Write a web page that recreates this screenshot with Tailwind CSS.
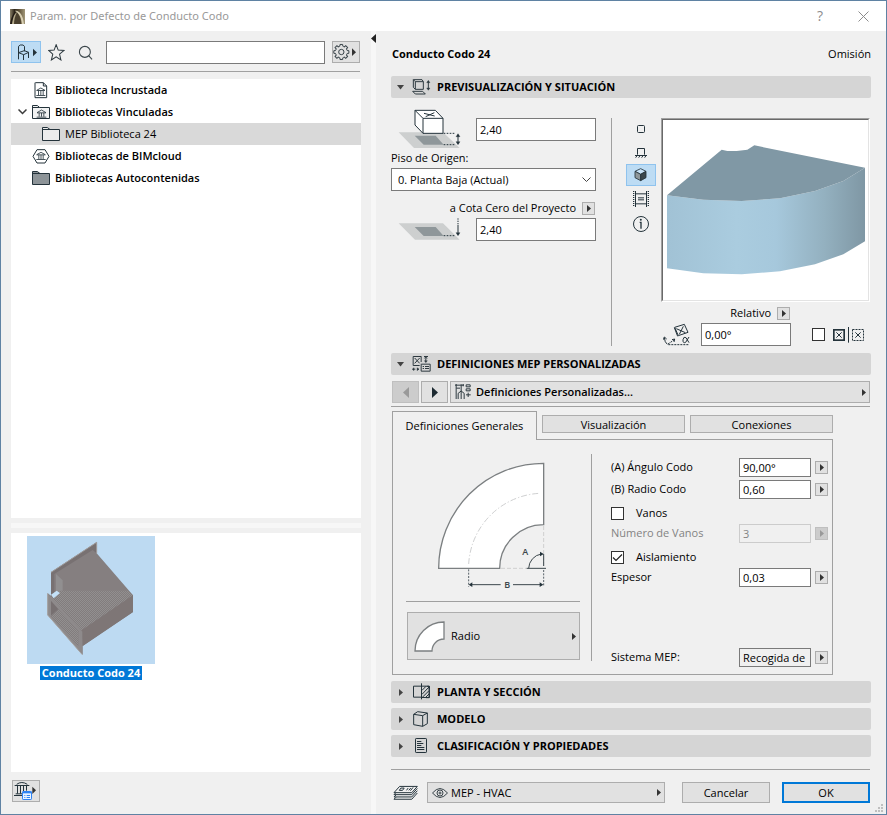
<!DOCTYPE html>
<html lang="es">
<head>
<meta charset="utf-8">
<meta name="viewport" content="width=device-width, initial-scale=1">
<title>Param. por Defecto de Conducto Codo</title>
<script src="https://cdn.jsdelivr.net/npm/@tailwindcss/browser@4"></script>
</head>
<body class="bg-[#f0f0f0] font-['Open_Sans','Noto_Sans',sans-serif] text-[11px] leading-4 text-black">
<div class="relative flex min-h-screen flex-col border border-[#5f82a3]">

  <!-- Title bar -->
  <header class="flex h-[30px] shrink-0 items-center bg-white pl-[9px] pr-[17px]">
    <svg class="size-[15px]" viewBox="0 0 15 15" aria-hidden="true">
      <defs><linearGradient id="lg" x1="0" y1="0" x2="1" y2="0"><stop offset="0" stop-color="#8b8168"/><stop offset=".3" stop-color="#2e261b"/><stop offset=".6" stop-color="#5d5138"/><stop offset="1" stop-color="#a3987a"/></linearGradient></defs>
      <rect width="15" height="15" fill="url(#lg)"/>
      <path d="M0 15C1 9 3 4 6 2L5 6 3 15Z" fill="#241d16"/>
      <path d="M5 2C9 1 13 6 14 15H12C11 8 9 4 5 2Z" fill="#d9d0b4"/>
      <path d="M3 15C4 9 5 6 7 4C10 7 11 11 11 15Z" fill="#4a402e"/>
      <path d="M2 15C3 9 4 5 7 3C5 7 4 11 4 15Z" fill="#b5aa8b"/>
    </svg>
    <h1 class="ml-[5px] flex-1 font-['Noto_Sans','Open_Sans',sans-serif] text-[#999]">Param. por Defecto de Conducto Codo</h1>
    <button aria-label="Ayuda" class="w-5 text-sm text-[#8c8c8c]">?</button>
    <button aria-label="Cerrar" class="ml-[28px]"><svg class="size-[11px]" viewBox="0 0 11 11" fill="none" stroke="#8c8c8c"><path d="M.5.5l10 10M10.5.5l-10 10"/></svg></button>
  </header>

  <div class="grid flex-1 grid-cols-[375fr_510fr]">

    <!-- Library browser -->
    <aside class="flex flex-col pb-3">
      <div class="flex min-h-0 flex-1">
        <div class="flex min-w-0 flex-1 flex-col pl-[10px] pr-[10px]">
          <div class="mt-[10px] flex h-[22px] items-center pr-px">
            <button aria-label="Tipo de objeto" class="flex h-[22px] w-[30px] items-center justify-center border border-[#8fc3ee] bg-[#bddcf4]">
              <svg class="h-[22px] w-[30px] shrink-0" viewBox="33 123 90 66" fill="none" stroke="#24333b" stroke-width="3"><path d="M55.500 178V139L61 135H69L73.500 139V154M55.500 158L71 164L86 157L73 152L55.500 158M70.500 164V180M85.500 157V174"/><path d="M99 146V169L111 157.500Z" fill="#24333b" stroke="none"/></svg>
            </button>
            <button aria-label="Favoritos" class="ml-[7px]"><svg class="size-[17px]" viewBox="144 132 50 50" fill="none" stroke="#2e3a40" stroke-width="3"><path d="M168 134L174 150L191 151L178 162L182 179L168 170L154 179L158 162L146 151L162 150Z"/></svg></button>
            <button aria-label="Buscar" class="ml-[13px]"><svg class="size-[15px]" viewBox="234 132 48 48" fill="none" stroke="#3b464b" stroke-width="3.500"><circle cx="256" cy="154" r="17.500"/><path d="M268 166L279 178"/></svg></button>
            <input aria-label="Texto de búsqueda" class="ml-[13px] h-[23px] min-w-0 flex-1 border border-[#7a7a7a] bg-white px-1">
            <button aria-label="Ajustes de biblioteca" class="ml-[7px] h-[22px] w-[28px] border border-[#adadad] bg-[#e1e1e1]">
              <svg class="h-5 w-[26px]" viewBox="1000 127 78 60" fill="none" stroke="#3a454b" stroke-width="3">
                <defs><path id="tooth" d="M16.600-6.900L17.500-4.400L22.600-4V4L17.500 4.400L16.600 6.900"/></defs>
                <g transform="translate(1025 157)"><use href="#tooth"/><use href="#tooth" transform="rotate(45)"/><use href="#tooth" transform="rotate(90)"/><use href="#tooth" transform="rotate(135)"/><use href="#tooth" transform="rotate(180)"/><use href="#tooth" transform="rotate(225)"/><use href="#tooth" transform="rotate(270)"/><use href="#tooth" transform="rotate(315)"/><circle r="8"/></g>
                <path d="M1057 146V169L1069 157.500Z" fill="#333" stroke="none"/></svg>
            </button>
          </div>
          <div class="mr-px mt-2 h-px shrink-0 bg-[#a0a0a0]"></div>

          <ul class="mt-[7px] grow-[439] basis-0 bg-white font-semibold">
            <li class="flex h-[22px] items-center pl-[21px]">
              <svg class="h-[17px] w-[18px]" viewBox="95 244 54 51" fill="none" stroke="#24333b" stroke-width="3"><path d="M105 246H129L139 256V291H104V246M129 246V256H139"/><path d="M109 269L121.500 262L134 269M109 269.500H134M114.500 270V283M121.500 270V283M128.500 270V283M108 284.500H135" stroke-width="2.500"/></svg>
              <span class="ml-[5px]">Biblioteca Incrustada</span></li>
            <li class="flex h-[22px] items-center pl-[7px]">
              <svg class="h-[6px] w-[9px]" viewBox="0 0 9 6" fill="none" stroke="#3c3c3c" stroke-width="1.500"><path d="M.5.5L4.500 4.500L8.500.5"/></svg>
              <svg class="ml-[5px] h-[17px] w-[18px]" viewBox="96 311 54 51" fill="none" stroke="#24333b" stroke-width="3"><path d="M97.500 354.500V315.500H112L119 321.500H148.500V354.500ZM98 321.500H119" fill="#f1f2f2"/><path d="M111 337L124.500 329L138 337M111 337.500H138M117.500 338V349M124.500 338V349M131.500 338V349M110 350.500H139" stroke-width="2.500"/></svg>
              <span class="ml-[5px]">Bibliotecas Vinculadas</span></li>
            <li class="flex h-[22px] items-center bg-[#d9d9d9] pl-[31px] font-normal">
              <svg class="h-[17px] w-[18px]" viewBox="126 377 54 51" fill="none" stroke="#24333b" stroke-width="3"><path d="M127.500 420.500V381.500H142L150 387.500H178.500V420.500ZM128 387.500H150" fill="#ececec"/></svg>
              <span class="ml-[5px]">MEP Biblioteca 24</span></li>
            <li class="flex h-[22px] items-center pl-[21px]">
              <svg class="h-[17px] w-[18px]" viewBox="95 444 54 51" fill="none" stroke="#24333b" stroke-width="3"><path d="M110 449H134L146 469L134 489H110L98 469Z"/><path d="M109 464L122 457L135 464M109 464.500H135M115.500 465V477M122 465V477M128.500 465V477M108 478.500H136" stroke-width="2.500"/></svg>
              <span class="ml-[5px]">Bibliotecas de BIMcloud</span></li>
            <li class="flex h-[22px] items-center pl-[21px]">
              <svg class="h-[17px] w-[18px]" viewBox="96 509 54 51" fill="#8d9498" stroke="#24333b" stroke-width="3"><path d="M97.500 552.500V513.500H112L120 519.500H148.500V552.500ZM98 519.500H120"/></svg>
              <span class="ml-[5px]">Bibliotecas Autocontenidas</span></li>
          </ul>
          <div class="my-[5px] h-[5px] shrink-0 bg-[#f7f7f7]"></div>
          <div class="grow-[236] basis-0 bg-white pl-4 pt-[3px]">
            <figure class="flex w-32 flex-col items-center gap-[2px]">
              <svg class="size-32 bg-[#bddaf2]" viewBox="81 78 384 384">
                <defs><pattern id="dots" width="6" height="6" patternUnits="userSpaceOnUse"><rect width="6" height="6" fill="#827c7d"/><rect width="3" height="3" fill="#929090"/><rect x="3" y="3" width="3" height="3" fill="#929090"/></pattern></defs>
                <path d="M153 187L290 97V130L399 256V306L248 408V434L143 315V250L153 257Z" fill="#857f80"/>
                <path d="M153 187L290 97V130L278 120L163 192V250L153 257Z" fill="#787172"/>
                <path d="M153 187L290 97V130" fill="none" stroke="#a09d9d" stroke-width="3"/>
                <path d="M168 192L188 211V242L168 247Z" fill="#918f90"/>
                <path d="M180 242H385L399 256L245 361L152 263Z" fill="url(#dots)"/>
                <path d="M245 361L399 256V306L248 408Z" fill="#7e7676"/>
                <path d="M143 250L247 365V434L143 315Z" fill="#8e8a8b"/>
                <path d="M153 273L235 364V407L153 318Z" fill="#817b7c"/>
                <path d="M153 273L175 298L153 318Z" fill="#777071"/>
                <path d="M153 318L175 298L235 364V407Z" fill="url(#dots)"/>
                <path d="M143 250V315L247 434" fill="none" stroke="#a5a3a3" stroke-width="3"/>
                <path d="M153 254L170 242L180 249L161 265Z" fill="#c4e1f8"/>
              </svg>
              <figcaption class="bg-[#0078d7] px-[2px] text-[11px] leading-[14px] font-bold text-white">Conducto Codo 24</figcaption>
            </figure>
          </div>
        </div>
        <div class="-mb-[42px] w-[5px] shrink-0 bg-[#f7f7f7]"><svg class="mt-[3px] h-[9px] w-[5px]" viewBox="0 0 5 9"><path d="M5 0V9L0 4.500Z" fill="#222"/></svg></div>
      </div>
      <div class="ml-[11px] mt-2 h-[22px]">
        <button aria-label="Gestor de bibliotecas" class="h-[22px] w-[28px] border border-[#adadad] bg-[#e1e1e1]">
          <svg class="h-5 w-[26px]" viewBox="39 63 78 60" fill="none" stroke="#24333b" stroke-width="3"><path d="M44 76.500H88M50 73Q65 62 82 73M52.500 78V101M61.500 78V101M70.500 78V94M79.500 78V92M47 101.500H66M42 106.500H66"/><rect x="67.500" y="94.500" width="27" height="24" rx="2" fill="#eaf4ff" stroke="#2e83f3"/><path d="M68 97.500H95" stroke="#2e83f3" stroke-width="5"/><path d="M73 106.500H76M80 106.500H90M73 112.500H76M80 112.500H90" stroke="#2e83f3"/><path d="M97 80V102L108 91Z" fill="#333" stroke="none"/></svg>
        </button>
      </div>
    </aside>

    <!-- Parameters -->
    <main class="flex flex-col pb-[11px] pl-[15px] pr-[15px]">
      <div class="mt-[15px] flex h-4 justify-between pl-px"><h2 class="font-bold">Conducto Codo 24</h2><span>Omisión</span></div>

      <button class="mt-[14px] flex h-[22px] w-full shrink-0 items-center rounded-[2px] bg-[#d5d5d5] pl-[6px] font-bold">
        <svg class="h-[5px] w-[7px]" viewBox="0 0 7 5"><path d="M0 0H7L3.500 4.500Z" fill="#444"/></svg>
        <svg class="ml-[8px] h-[18px] w-5" viewBox="96 144 60 54" fill="none" stroke="#2e3a40" stroke-width="3"><path d="M100 149L106 155H130V178H106V155M100 149H126L130 155M100 149V172L106 178M98 184H128L136 192H106ZM145 153V178"/><path d="M140 158L145 151L150 158ZM140 174L145 181L150 174Z" fill="#2e3a40" stroke-width="1"/></svg>
        <span class="ml-[5px]">PREVISUALIZACIÓN Y SITUACIÓN</span>
      </button>

      <section class="mb-[7px] mt-5 flex">
        <div class="w-[205px] shrink-0">
          <div class="relative flex h-[23px] justify-end">
            <svg class="absolute -top-[9px] left-[7px] h-10 w-16" viewBox="55 237 192 120" fill="none" stroke="#24333b" stroke-width="3"><path d="M57 307H190L240 354H103Z" fill="#cdcfcf" stroke="none"/><path d="M105 317H168L192 344H132Z" fill="#8f979a" stroke="none"/><path d="M106 241H167L190 265V310H130L106 285Z" fill="#fff"/><path d="M106 241L130 265H190M130 265V310M133 250L165 258M164 248L138 260"/><path d="M192 310H228M192 344H228" stroke-dasharray="5 4"/><path d="M235 314V341"/><path d="M229 320L235 311L241 320ZM229 335L235 344L241 335Z" fill="#24333b" stroke-width="1"/></svg>
            <input aria-label="Cota respecto al piso" value="2,40" class="h-[23px] w-[120px] border border-[#7a7a7a] bg-white px-[3px]">
          </div>
          <label for="story" class="mt-[9px] block">Piso de Origen:</label>
          <div class="relative mt-[2px]">
            <select id="story" class="block h-[23px] w-full appearance-none border border-[#7a7a7a] bg-white pl-[6px] pr-5"><option>0. Planta Baja (Actual)</option></select>
            <svg class="pointer-events-none absolute right-[5px] top-[9px] h-[6px] w-[9px]" viewBox="0 0 9 6" fill="none" stroke="#444"><path d="M.5.5L4.500 4.500L8.500.5"/></svg>
          </div>
          <div class="mt-[9px] flex h-4 items-center justify-end pr-px"><label for="zero">a Cota Cero del Proyecto</label>
            <button aria-label="Elegir referencia" class="ml-[6px] flex size-[13px] items-center justify-center border border-[#adadad] bg-[#e1e1e1]"><svg class="h-[7px] w-1" viewBox="0 0 4 7"><path d="M0 0V7L4 3.500Z" fill="#333"/></svg></button></div>
          <div class="mt-[2px] flex justify-between pl-[7px]">
            <svg class="h-[23px] w-16" viewBox="55 564 192 69" fill="none" stroke="#24333b" stroke-width="3"><path d="M57 580H190L240 629H106Z" fill="#cdcfcf" stroke="none"/><path d="M105 591H168L192 618H132Z" fill="#8f979a" stroke="none"/><path d="M235 565V585" stroke-dasharray="4 3"/><path d="M235 585V614"/><path d="M192 617H228" stroke-dasharray="5 4"/><path d="M229 608L235 617L241 608Z" fill="#24333b" stroke-width="1"/></svg>
            <input id="zero" value="2,40" class="h-[23px] w-[120px] border border-[#7a7a7a] bg-white px-[3px]">
          </div>
        </div>
        <div class="ml-[15px] w-px bg-[#a0a0a0]"></div>
        <div class="ml-[14px] flex w-[30px] shrink-0 flex-col items-center">
          <button aria-label="Vista en planta" class="flex h-[22px] w-full items-center justify-center"><svg class="size-2" viewBox="0 0 8 8" fill="none" stroke="#24333b"><rect x=".5" y=".5" width="7" height="7" rx="1"/></svg></button>
          <button aria-label="Vista frontal" class="mt-[2px] flex h-[22px] w-full items-center justify-center"><svg class="h-[10px] w-3" viewBox="75 144 36 30" fill="none" stroke="#24333b" stroke-width="3"><path d="M82.500 164V145.500H103.500V164M75 166.500H111M81 167L77 173M90 167L86 173M99 167L95 173M108 167L104 173"/></svg></button>
          <button aria-label="Vista 3D" class="flex h-[22px] w-full items-center justify-center border border-[#8fc3ee] bg-[#bddcf4]"><svg class="size-[14px]" viewBox="73 205 42 42" stroke="#24333b" stroke-width="2.500" stroke-linejoin="round"><path d="M76 215L93 207L109 215L93 224Z" fill="#c9e3f8"/><path d="M76 215L93 224V243L76 234Z" fill="#8f979a"/><path d="M109 215L93 224V243L109 234Z" fill="#3b474d"/></svg></button>
          <button aria-label="Imagen de vista previa" class="mt-[2px] flex h-[22px] w-full items-center justify-center"><svg class="size-4" viewBox="69 272 48 48" fill="none" stroke="#24333b" stroke-width="3"><path d="M76.500 272V320M109.500 272V320M77 280.500H109M77 310.500H109M84 292.500H102M84 298.500H102"/><path d="M71 272V320M115 272V320" stroke-width="4" stroke-dasharray="3 3"/></svg></button>
          <button aria-label="Información" class="mt-[3px] flex h-[22px] w-full items-center justify-center"><svg class="size-4" viewBox="69 348 48 48" fill="none" stroke="#24333b" stroke-width="3"><circle cx="93" cy="372" r="22.500"/><path d="M89 367H93V386" stroke-width="4"/><circle cx="92.500" cy="359.500" r="3" fill="#24333b" stroke="none"/></svg></button>
        </div>
        <div class="ml-[5px] min-w-0 flex-1">
          <div class="mr-px h-[184px] border border-b-white border-l-[#a0a0a0] border-r-white border-t-[#a0a0a0]">
            <div class="h-full border border-b-[#e3e3e3] border-l-[#696969] border-r-[#e3e3e3] border-t-[#696969] bg-white">
            <svg class="h-full w-full" viewBox="159 61 615 540">
              <defs><linearGradient id="duct"><stop offset="0" stop-color="#a1c2d5"/><stop offset=".35" stop-color="#aaccdf"/><stop offset=".55" stop-color="#a6c8dc"/><stop offset=".8" stop-color="#93b0bf"/><stop offset="1" stop-color="#7f97a4"/></linearGradient></defs>
              <path d="M171 287L280 300L395 304L510 296L615 274L700 244L765 204V425L700 464L615 494L510 515L395 524L280 521L171 506Z" fill="url(#duct)"/>
              <path d="M171 287L335 150L352 154H380L412 150L433 137L765 204L700 244L615 274L510 296L395 304L280 300Z" fill="#8098a5"/>
            </svg>
            </div>
          </div>
          <div class="mt-[3px] flex h-4 items-center justify-end pr-[81px]"><label for="angle">Relativo</label>
            <button aria-label="Elegir modo de ángulo" class="ml-[6px] flex size-[13px] items-center justify-center border border-[#adadad] bg-[#e1e1e1]"><svg class="h-[7px] w-1" viewBox="0 0 4 7"><path d="M0 0V7L4 3.500Z" fill="#333"/></svg></button></div>
          <div class="mt-[2px] flex h-[23px] items-center pr-[6px]">
            <svg class="ml-[2px] h-[23px] w-[27px] shrink-0" viewBox="157 672 81 69" fill="none" stroke="#24333b" stroke-width="3"><path d="M192 685L221 676L232 700L203 710ZM197 689L224 701M218 682L206 706M191 686L201 712"/><path d="M172 735L193 721M173 737H236" stroke-dasharray="6 3"/><path d="M161 716Q162 730 170 736M158 722L161 714L168 720M184 722L192 720L190 729"/><path d="M235 714L225 730Q216 734 217 722Q219 711 226 716L235 731"/></svg>
            <input id="angle" value="0,00°" class="ml-[11px] h-[23px] min-w-0 w-[90px] border border-[#7a7a7a] bg-white px-[3px]">
            <input type="checkbox" aria-label="Reflejar" class="ml-auto size-[13px] appearance-none border border-[#333] bg-white">
            <svg class="ml-2 h-4 w-[32px] shrink-0" viewBox="669 681 96 48" fill="none" stroke="#24333b" stroke-width="3"><rect x="671.500" y="689.500" width="31" height="31" stroke-width="5"/><path d="M679 697L695 713M695 697L679 713M715.500 681V728"/><rect x="727.500" y="688.500" width="33" height="33" stroke-dasharray="6 3"/><path d="M736 697L752 713M752 697L736 713"/></svg>
          </div>
        </div>
      </section>

      <button class="flex h-[22px] w-full shrink-0 items-center rounded-[2px] bg-[#d5d5d5] pl-[6px] font-bold">
        <svg class="h-[5px] w-[7px]" viewBox="0 0 7 5"><path d="M0 0H7L3.500 4.500Z" fill="#444"/></svg>
        <svg class="ml-[8px] h-[18px] w-5" viewBox="95 31 60 54" fill="none" stroke="#2e3a40" stroke-width="3"><path d="M122.500 35.500H98.500V62.500H118M122.500 35V52M103 40L118 56M118 40L103 56"/><path d="M131 35.500H143M136.500 42V49M97 73.500H105M110 73.500H116"/><path d="M132 41L136.500 36L141 41ZM132 48L136.500 54L141 48ZM101 69L96 73.500L101 78ZM110 69L116 73.500L110 78Z" fill="#2e3a40" stroke-width="1"/><path d="M122.500 58.500H149.500V79.500H122.500ZM127 65.500H131M134 65.500H146M127 71.500H131M134 71.500H146"/></svg>
        <span class="ml-[5px]">DEFINICIONES MEP PERSONALIZADAS</span>
      </button>

      <div class="mt-[6px] flex gap-[2px] pl-px pr-px">
        <button disabled aria-label="Anterior" class="flex h-[22px] w-[27px] items-center justify-center border border-[#bfbfbf] bg-[#ccc]"><svg class="h-[11px] w-[6px]" viewBox="0 0 6 11"><path d="M6 0V11L0 5.500Z" fill="#999"/></svg></button>
        <button aria-label="Siguiente" class="flex h-[22px] w-[27px] items-center justify-center border border-[#adadad] bg-[#e1e1e1]"><svg class="h-[11px] w-[6px]" viewBox="0 0 6 11"><path d="M0 0V11L6 5.500Z" fill="#1c2a31"/></svg></button>
        <button class="flex h-[22px] flex-1 items-center border border-[#adadad] bg-[#e1e1e1] pl-[3px] pr-[3px] font-semibold">
          <svg class="h-[18px] w-[18px]" viewBox="222 114 54 54" fill="none" stroke="#2e3a40" stroke-width="3"><path d="M225 120.500H252M228.500 117V162M229 129.500H240M243.500 118V138M249.500 117V124M234.500 162V145L243.500 138L252.500 145V162M243.500 138V162M258.500 119.500H270.500V125.500H258.500ZM258.500 131.500H270.500V137.500H258.500ZM264.500 143V156M258 149.500H272"/></svg>
          <span class="ml-1 flex-1 text-left">Definiciones Personalizadas...</span>
          <svg class="h-[7px] w-1" viewBox="0 0 4 7"><path d="M0 0V7L4 3.500Z" fill="#333"/></svg>
        </button>
      </div>
      <div class="mr-px mt-[3px] h-px shrink-0 bg-[#a0a0a0]"></div>

      <div class="ml-px mr-[38px] mt-1">
        <div role="tablist" class="flex items-start gap-[5px]">
          <button role="tab" aria-selected="true" class="relative -mb-px h-[29px] flex-[145] border border-b-0 border-[#a0a0a0] bg-[#f0f0f0]">Definiciones Generales</button>
          <button role="tab" class="mt-1 h-[18px] flex-[143] border border-[#adadad] bg-[#e1e1e1] leading-none">Visualización</button>
          <button role="tab" class="mt-1 h-[18px] flex-[143] border border-[#adadad] bg-[#e1e1e1] leading-none">Conexiones</button>
        </div>
        <div role="tabpanel" class="flex border border-[#a0a0a0] pb-[13px] pl-[13px] pr-1 pt-[14px]">
          <div class="flex w-[175px] shrink-0 flex-col">
            <svg class="-mt-px h-[148px] w-[175px]" viewBox="18 39 525 444" fill="none" stroke="#7b7f81" stroke-width="4">
              <path d="M116 385A315 315 0 0 1 431 70V254A132 131 0 0 0 299 385Z" fill="#fff"/>
              <path d="M206 372A225 225 0 0 1 418 160" stroke="#cfd0d1" stroke-width="3" stroke-dasharray="18 6 4 6"/>
              <path d="M431 258V385M303 385H380" stroke="#cfcfcf" stroke-width="3" stroke-dasharray="12 6"/>
              <path d="M380 385H438M386 385A45 45 0 0 1 424 342M431 342V378" stroke="#3c474c" stroke-width="3"/>
              <path d="M206 388V440M431 390V440" stroke="#59636a" stroke-width="3" stroke-dasharray="6 4"/>
              <path d="M212 434H302M339 434H424" stroke="#3c474c" stroke-width="3"/>
              <path d="M206 434L217 427V441ZM430 434L419 427V441ZM431 342L420 335V349Z" fill="#24333b" stroke="none"/>
              <text x="367" y="346" font-size="27" font-weight="600" fill="#3c474c" stroke="none">A</text>
              <text x="313" y="443" font-size="27" font-weight="600" fill="#3c474c" stroke="none">B</text>
            </svg>
            <div class="mr-px h-px bg-[#a0a0a0]"></div>
            <button class="ml-px mr-px mt-[10px] flex h-12 items-center border border-[#adadad] bg-[#e1e1e1] pl-[6px] pr-[3px]">
              <svg class="size-[31px]" viewBox="0 0 31 31" fill="#fff" stroke="#7b7f81" stroke-width="1.300"><path d="M1 30A29 29 0 0 1 30 1V18A12 12 0 0 0 18 30Z"/></svg>
              <span class="ml-[6px] flex-1 text-left">Radio</span>
              <svg class="h-[7px] w-1" viewBox="0 0 4 7"><path d="M0 0V7L4 3.500Z" fill="#333"/></svg>
            </button>
          </div>
          <div class="ml-[10px] h-[207px] w-px bg-[#a0a0a0]"></div>
          <div class="ml-[19px] flex min-w-0 flex-1 flex-col pt-[3px]">
            <div class="flex h-5 items-center"><label for="pA" class="flex-1">(A) Ángulo Codo</label><input id="pA" value="90,00°" class="h-[19px] w-[72px] border border-[#7a7a7a] bg-white px-[3px]"><button aria-label="Opciones de ángulo" class="ml-1 flex size-[13px] items-center justify-center border border-[#adadad] bg-[#e1e1e1]"><svg class="h-[7px] w-1" viewBox="0 0 4 7"><path d="M0 0V7L4 3.500Z" fill="#333"/></svg></button></div>
            <div class="mt-[2px] flex h-5 items-center"><label for="pB" class="flex-1">(B) Radio Codo</label><input id="pB" value="0,60" class="h-[19px] w-[72px] border border-[#7a7a7a] bg-white px-[3px]"><button aria-label="Opciones de radio" class="ml-1 flex size-[13px] items-center justify-center border border-[#adadad] bg-[#e1e1e1]"><svg class="h-[7px] w-1" viewBox="0 0 4 7"><path d="M0 0V7L4 3.500Z" fill="#333"/></svg></button></div>
            <div class="mt-1 flex h-5 items-center"><input id="vanos" type="checkbox" class="size-[13px] appearance-none border border-[#333] bg-white"><label for="vanos" class="ml-3">Vanos</label></div>
            <div class="flex h-5 items-center text-[#838383]"><label for="nv" class="flex-1">Número de Vanos</label><input id="nv" disabled value="3" class="h-[19px] w-[72px] border border-[#ccc] px-[3px]"><button disabled aria-label="Opciones de número de vanos" class="ml-1 flex size-[13px] items-center justify-center border border-[#bfbfbf] bg-[#ccc]"><svg class="h-[7px] w-1" viewBox="0 0 4 7"><path d="M0 0V7L4 3.500Z" fill="#999"/></svg></button></div>
            <div class="mt-1 flex h-5 items-center"><span class="relative flex size-[13px]"><input id="ais" type="checkbox" checked class="size-[13px] appearance-none border border-[#333] bg-white"><svg class="pointer-events-none absolute left-0 top-0 size-[13px]" viewBox="0 0 13 13" fill="none" stroke="#222" stroke-width="1.200"><path d="M2 6.500L5 9.500L11 3.500"/></svg></span><label for="ais" class="ml-3">Aislamiento</label></div>
            <div class="flex h-5 items-center"><label for="esp" class="flex-1">Espesor</label><input id="esp" value="0,03" class="h-[19px] w-[72px] border border-[#7a7a7a] bg-white px-[3px]"><button aria-label="Opciones de espesor" class="ml-1 flex size-[13px] items-center justify-center border border-[#adadad] bg-[#e1e1e1]"><svg class="h-[7px] w-1" viewBox="0 0 4 7"><path d="M0 0V7L4 3.500Z" fill="#333"/></svg></button></div>
            <div class="mb-[-6px] mt-auto flex h-5 items-center"><label for="sys" class="flex-1">Sistema MEP:</label><input id="sys" readonly value="Recogida de" class="h-[19px] w-[72px] border border-[#7a7a7a] px-[3px]"><button aria-label="Elegir sistema" class="ml-1 flex size-[13px] items-center justify-center border border-[#adadad] bg-[#e1e1e1]"><svg class="h-[7px] w-1" viewBox="0 0 4 7"><path d="M0 0V7L4 3.500Z" fill="#333"/></svg></button></div>
          </div>
        </div>
      </div>

      <div class="mt-[6px] flex flex-col gap-[5px] font-bold">
        <button class="flex h-[22px] items-center rounded-[2px] bg-[#d5d5d5] pl-2">
          <svg class="h-[7px] w-1" viewBox="0 0 4 7"><path d="M0 0V7L4 3.500Z" fill="#444"/></svg>
          <svg class="ml-[9px] h-[18px] w-5" viewBox="96 40 60 54" fill="none" stroke="#24333b" stroke-width="3"><path d="M100.500 49.500H124.500V82.500H100.500ZM124.500 41V89M124 49.500H147.500V83.500H124"/><path d="M126 62L138 50M126 74L147 52M127 83L147 63M137 83L147 73" stroke-width="3"/><path d="M141 50H148V58M148 50V84H138"/></svg>
          <span class="ml-[5px]">PLANTA Y SECCIÓN</span></button>
        <button class="flex h-[22px] items-center rounded-[2px] bg-[#d5d5d5] pl-2">
          <svg class="h-[7px] w-1" viewBox="0 0 4 7"><path d="M0 0V7L4 3.500Z" fill="#444"/></svg>
          <svg class="ml-[9px] h-[18px] w-5" viewBox="96 120 60 54" fill="none" stroke="#24333b" stroke-width="3"><path d="M101 133L113 125L142 129V161L128 169L101 164ZM101 133L128 137L142 129M128 137V169"/></svg>
          <span class="ml-[5px]">MODELO</span></button>
        <button class="flex h-[22px] items-center rounded-[2px] bg-[#d5d5d5] pl-2">
          <svg class="h-[7px] w-1" viewBox="0 0 4 7"><path d="M0 0V7L4 3.500Z" fill="#444"/></svg>
          <svg class="ml-[9px] h-[18px] w-5" viewBox="96 200 60 54" fill="none" stroke="#24333b" stroke-width="3"><rect x="106.500" y="204.500" width="33" height="42" rx="2"/><path d="M111 213.500H124M111 219.500H130M111 225.500H124M111 231.500H133M111 237.500H133"/></svg>
          <span class="ml-[5px]">CLASIFICACIÓN Y PROPIEDADES</span></button>
      </div>

      <footer class="mr-px mt-auto flex items-center border-t border-[#a0a0a0] pt-3">
        <svg class="ml-[2px] h-[16px] w-[25px] shrink-0" viewBox="38 343 76 48" fill="none" stroke="#24333b" stroke-width="3"><path d="M58 347H112L95 366H41ZM47 366L41 372H95L112 353M47 373L41 379H95L112 360M47 380L41 386H95L112 367M62 352H72L67 359H57ZM84 352L79 359M92 352L86 359M99 350L91 360"/></svg>
        <button class="ml-[9px] flex h-[21px] flex-1 items-center border border-[#adadad] bg-[#e1e1e1] pl-1 pr-[3px]">
          <svg class="h-[10px] w-4" viewBox="0 0 16 10" fill="none" stroke="#3a454b"><path d="M.5 5Q8-4 15.500 5Q8 14 .5 5Z"/><circle cx="8" cy="5" r="3"/><circle cx="8" cy="5" r="1"/></svg>
          <span class="ml-[3px] flex-1 text-left">MEP - HVAC</span>
          <svg class="h-[7px] w-1" viewBox="0 0 4 7"><path d="M0 0V7L4 3.500Z" fill="#333"/></svg>
        </button>
        <button class="ml-[17px] h-[21px] w-[88px] border border-[#adadad] bg-[#e1e1e1] leading-none">Cancelar</button>
        <button class="ml-3 h-[21px] w-[88px] border-2 border-[#0078d7] bg-[#e1e1e1] leading-none">OK</button>
      </footer>
    </main>
  </div>
  <svg class="absolute bottom-[2px] right-[3px] size-2" viewBox="0 0 8 8" fill="#bfbfbf" aria-hidden="true"><path d="M6 0h2v2H6zM3 3h2v2H3zM6 3h2v2H6zM0 6h2v2H0zM3 6h2v2H3zM6 6h2v2H6z"/></svg>
</div>
</body>
</html>
